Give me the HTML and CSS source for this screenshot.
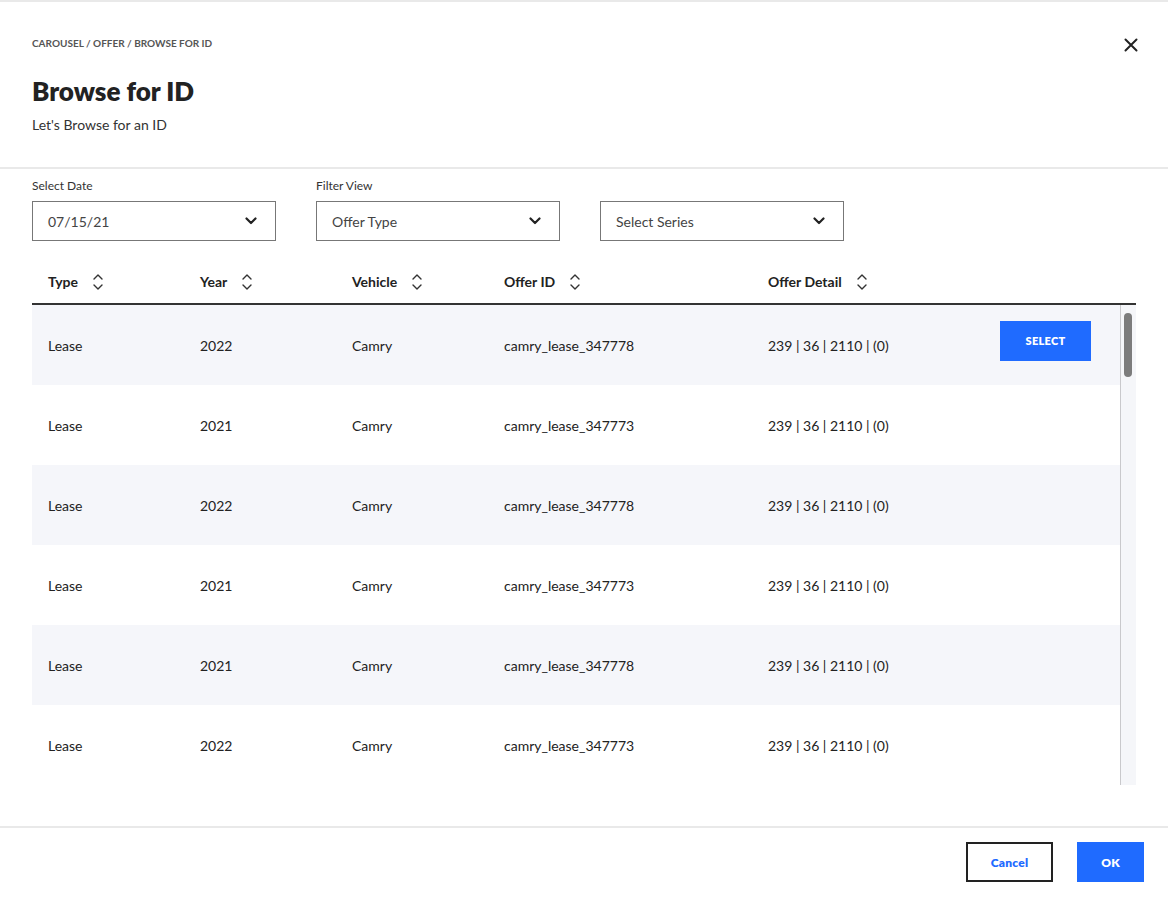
FILE: index.html
```html
<!DOCTYPE html>
<html lang="en">
<head>
<meta charset="utf-8">
<title>Browse for ID</title>
<link rel="stylesheet" href="styles.css">
</head>
<body>
<div class="modal">
  <header class="header">
    <div class="header-top">
      <div class="crumbs">CAROUSEL / OFFER / BROWSE FOR ID</div>
      <button class="close" aria-label="Close">
        <svg width="14" height="14" viewBox="0 0 14 14"><path d="M1.5 1.5 L12.5 12.5 M12.5 1.5 L1.5 12.5" stroke="#222" stroke-width="2" fill="none" stroke-linecap="round"/></svg>
      </button>
    </div>
    <h1 class="title">Browse for ID</h1>
    <p class="subtitle">Let's Browse for an ID</p>
  </header>

  <section class="filters">
    <div class="field">
      <label class="label">Select Date</label>
      <div class="select"><span>07/15/21</span><svg class="chev" width="12" height="8" viewBox="0 0 12 8"><path d="M1.5 1.5 L6 6 L10.5 1.5" stroke="#222" stroke-width="2.2" fill="none" stroke-linecap="round" stroke-linejoin="round"/></svg></div>
    </div>
    <div class="field">
      <label class="label">Filter View</label>
      <div class="select"><span>Offer Type</span><svg class="chev" width="12" height="8" viewBox="0 0 12 8"><path d="M1.5 1.5 L6 6 L10.5 1.5" stroke="#222" stroke-width="2.2" fill="none" stroke-linecap="round" stroke-linejoin="round"/></svg></div>
    </div>
    <div class="field">
      <label class="label">&nbsp;</label>
      <div class="select"><span>Select Series</span><svg class="chev" width="12" height="8" viewBox="0 0 12 8"><path d="M1.5 1.5 L6 6 L10.5 1.5" stroke="#222" stroke-width="2.2" fill="none" stroke-linecap="round" stroke-linejoin="round"/></svg></div>
    </div>
  </section>

  <section class="table">
    <div class="thead">
      <div class="th">Type <svg class="sort" width="12" height="18" viewBox="0 0 12 18"><path d="M2 6 L6 2 L10 6 M2 12 L6 16 L10 12" stroke="#333" stroke-width="1.4" fill="none" stroke-linecap="round" stroke-linejoin="round"/></svg></div>
      <div class="th">Year <svg class="sort" width="12" height="18" viewBox="0 0 12 18"><path d="M2 6 L6 2 L10 6 M2 12 L6 16 L10 12" stroke="#333" stroke-width="1.4" fill="none" stroke-linecap="round" stroke-linejoin="round"/></svg></div>
      <div class="th">Vehicle <svg class="sort" width="12" height="18" viewBox="0 0 12 18"><path d="M2 6 L6 2 L10 6 M2 12 L6 16 L10 12" stroke="#333" stroke-width="1.4" fill="none" stroke-linecap="round" stroke-linejoin="round"/></svg></div>
      <div class="th">Offer ID <svg class="sort" width="12" height="18" viewBox="0 0 12 18"><path d="M2 6 L6 2 L10 6 M2 12 L6 16 L10 12" stroke="#333" stroke-width="1.4" fill="none" stroke-linecap="round" stroke-linejoin="round"/></svg></div>
      <div class="th">Offer Detail <svg class="sort" width="12" height="18" viewBox="0 0 12 18"><path d="M2 6 L6 2 L10 6 M2 12 L6 16 L10 12" stroke="#333" stroke-width="1.4" fill="none" stroke-linecap="round" stroke-linejoin="round"/></svg></div>
      <div class="th"></div>
    </div>
    <div class="tbody">
      <div class="rows">
        <div class="row alt">
          <div class="td">Lease</div><div class="td">2022</div><div class="td">Camry</div><div class="td">camry_lease_347778</div><div class="td">239 | 36 | 2110 | (0)</div>
          <div class="td"><button class="btn-select">SELECT</button></div>
        </div>
        <div class="row">
          <div class="td">Lease</div><div class="td">2021</div><div class="td">Camry</div><div class="td">camry_lease_347773</div><div class="td">239 | 36 | 2110 | (0)</div><div class="td"></div>
        </div>
        <div class="row alt">
          <div class="td">Lease</div><div class="td">2022</div><div class="td">Camry</div><div class="td">camry_lease_347778</div><div class="td">239 | 36 | 2110 | (0)</div><div class="td"></div>
        </div>
        <div class="row">
          <div class="td">Lease</div><div class="td">2021</div><div class="td">Camry</div><div class="td">camry_lease_347773</div><div class="td">239 | 36 | 2110 | (0)</div><div class="td"></div>
        </div>
        <div class="row alt">
          <div class="td">Lease</div><div class="td">2021</div><div class="td">Camry</div><div class="td">camry_lease_347778</div><div class="td">239 | 36 | 2110 | (0)</div><div class="td"></div>
        </div>
        <div class="row">
          <div class="td">Lease</div><div class="td">2022</div><div class="td">Camry</div><div class="td">camry_lease_347773</div><div class="td">239 | 36 | 2110 | (0)</div><div class="td"></div>
        </div>
      </div>
      <div class="scrollbar"><div class="thumb"></div></div>
    </div>
  </section>

  <footer class="footer">
    <button class="btn btn-cancel">Cancel</button>
    <button class="btn btn-ok">OK</button>
  </footer>
</div>
</body>
</html>
```
FILE: styles.css
```css
* { box-sizing: border-box; }
html, body { margin: 0; padding: 0; background: #fff; }
body {
  font-family: Lato, "Open Sans", "Liberation Sans", sans-serif;
  color: #222;
  width: 1168px;
  height: 898px;
  overflow: hidden;
}
.modal {
  border-top: 2px solid #e9e9e9;
  height: 898px;
}
.header {
  height: 167px;
  padding: 34px 30px 0 32px;
  border-bottom: 2px solid #e9e9e9;
}
.header-top {
  display: flex;
  justify-content: space-between;
  align-items: center;
  height: 14px;
}
.crumbs {
  font-size: 10px;
  font-weight: 700;
  color: #555;
  letter-spacing: 0;
}
.close {
  border: 0;
  background: none;
  padding: 0;
  margin-top: 4px;
  width: 14px;
  height: 14px;
  display: flex;
}
.title {
  margin: 25px 0 0;
  font-size: 26px;
  font-weight: 800;
  line-height: 32px;
  color: #222;
}
.subtitle {
  margin: 8px 0 0;
  font-size: 14px;
  line-height: 20px;
  color: #333;
}
.filters {
  display: flex;
  gap: 40px;
  padding: 9px 32px 0;
}
.field {
  display: flex;
  flex-direction: column;
}
.label {
  font-size: 12px;
  line-height: 16px;
  height: 16px;
  color: #333;
  margin-bottom: 7px;
}
.select {
  width: 244px;
  height: 40px;
  border: 1px solid #777;
  display: flex;
  align-items: center;
  justify-content: space-between;
  padding: 0 18px 0 15px;
  font-size: 14px;
  color: #444;
}
.chev { display: block; }
.table {
  margin: 21px 32px 0;
}
.thead {
  display: grid;
  grid-template-columns: 152px 152px 152px 264px 232px 1fr;
  height: 43px;
  border-bottom: 2px solid #333;
  align-items: center;
  padding-bottom: 2px;
}
.th {
  display: flex;
  align-items: center;
  gap: 14px;
  padding-left: 16px;
  font-size: 14px;
  font-weight: 700;
  color: #222;
}
.sort { display: block; }
.tbody {
  display: flex;
  height: 480px;
}
.rows {
  flex: 1;
}
.row {
  display: grid;
  grid-template-columns: 152px 152px 152px 264px 232px 1fr;
  height: 80px;
  align-items: center;
  font-size: 14px;
  color: #222;
}
.row.alt { background: #f5f6fa; }
.td { padding-left: 16px; }
.btn-select {
  width: 91px;
  height: 40px;
  border: 0;
  background: #1f6bff;
  color: #fff;
  font-family: inherit;
  font-weight: 800;
  font-size: 11px;
  letter-spacing: 0.3px;
  margin-top: -9px;
}
.scrollbar {
  width: 16px;
  border-left: 1px solid #c9c9cc;
  background: #f5f6f9;
  padding: 8px 0 0 3px;
}
.thumb {
  width: 8px;
  height: 64px;
  border-radius: 4px;
  background: #7c7c7c;
}
.footer {
  margin-top: 41px;
  border-top: 2px solid #e9e9e9;
  display: flex;
  justify-content: flex-end;
  gap: 24px;
  padding: 14px 24px 0 0;
}
.btn {
  height: 40px;
  font-family: inherit;
  font-weight: 800;
  font-size: 12px;
  letter-spacing: 0.2px;
}
.btn-cancel {
  width: 87px;
  background: #fff;
  border: 2px solid #222;
  color: #1f6bff;
}
.btn-ok {
  width: 67px;
  background: #1f6bff;
  border: 0;
  color: #fff;
}
```
